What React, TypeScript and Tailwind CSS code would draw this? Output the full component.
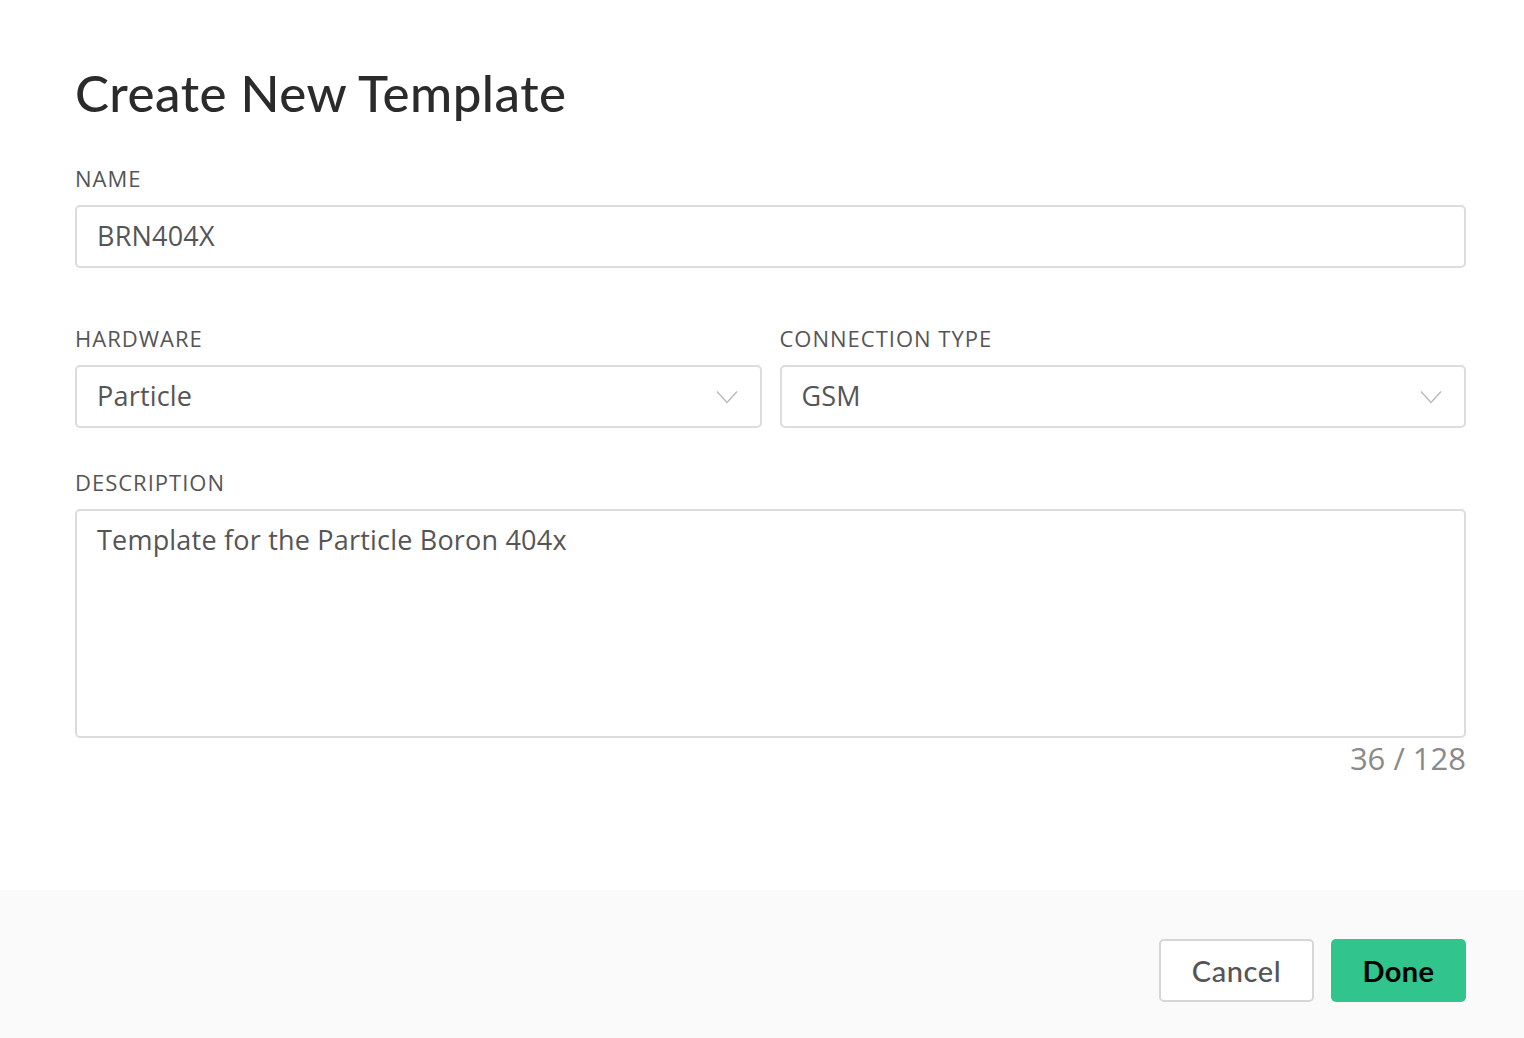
import React from "react";

const body = { fontFamily: '"Open Sans", "Noto Sans", sans-serif' };
const head = { fontFamily: 'Lato, "Noto Sans", sans-serif' };

function Chevron() {
  return (
    <svg width="22" height="14" viewBox="0 0 22 14" fill="none" className="shrink-0">
      <path d="M1 1.5 L11 12.5 L21 1.5" stroke="#b8b8b8" strokeWidth="1.3" />
    </svg>
  );
}

function Label({ children }: { children: React.ReactNode }) {
  return (
    <div className="text-[22px] leading-none text-[#555] mb-[16px] tracking-[1px]" style={body}>
      {children}
    </div>
  );
}

function Select({ value }: { value: string }) {
  return (
    <div className="h-[63px] flex items-center justify-between rounded-[5px] border-2 border-[#dcdcdc] bg-white pl-[20px] pr-[22px]">
      <span className="text-[27px] tracking-[0.2px] text-[#555]" style={body}>{value}</span>
      <Chevron />
    </div>
  );
}

export default function App() {
  return (
    <div className="w-[1524px] h-[1038px] bg-white flex flex-col">
      <div className="flex-1 pl-[75px] pr-[58px] pt-[67px]">
        <h1 className="text-[51px] leading-none font-medium tracking-[0.5px] text-[#2b2b2b] mb-[49px]" style={head}>
          Create New Template
        </h1>

        <Label>NAME</Label>
        <div className="h-[63px] flex items-center rounded-[5px] border-2 border-[#dcdcdc] bg-white px-[20px]">
          <span className="text-[27px] tracking-[0.2px] text-[#555]" style={body}>BRN404X</span>
        </div>

        <div className="grid grid-cols-2 gap-[18px] mt-[59px]">
          <div>
            <Label>HARDWARE</Label>
            <Select value="Particle" />
          </div>
          <div>
            <Label>CONNECTION TYPE</Label>
            <Select value="GSM" />
          </div>
        </div>

        <div className="mt-[43px]">
          <Label>DESCRIPTION</Label>
          <div className="h-[229px] rounded-[5px] border-2 border-[#dcdcdc] bg-white px-[20px] pt-[9px]">
            <span className="text-[27px] tracking-[0.2px] text-[#555]" style={body}>Template for the Particle Boron 404x</span>
          </div>
          <div className="text-right text-[31px] leading-none text-[#8a8a8a] mt-[5px]" style={body}>
            36 / 128
          </div>
        </div>
      </div>

      <div className="h-[148px] bg-[#fafafa] flex items-start justify-end gap-[17px] pr-[58px] pt-[49px]">
        <button className="w-[155px] h-[63px] rounded-[5px] border-2 border-[#d6d6d6] bg-white text-[29px] tracking-[0.6px] text-[#555] font-medium" style={head}>
          Cancel
        </button>
        <button className="w-[135px] h-[63px] rounded-[5px] bg-[#31c48d] text-[29px] tracking-[0.4px] text-black font-bold" style={head}>
          Done
        </button>
      </div>
    </div>
  );
}
